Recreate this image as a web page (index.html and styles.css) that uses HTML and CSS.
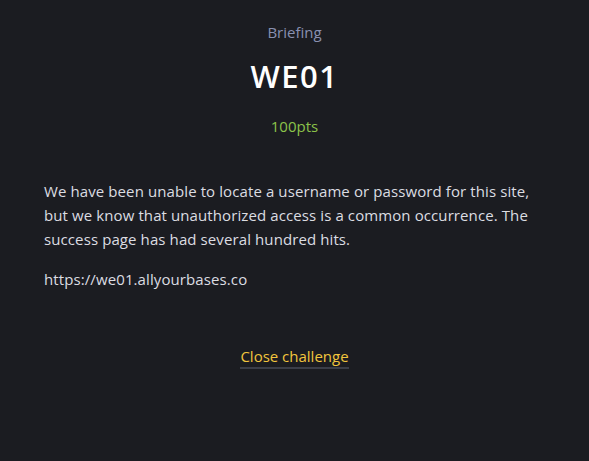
FILE: index.html
```html
<!DOCTYPE html>
<html>
<head>
<meta charset="utf-8">
<link rel="stylesheet" href="styles.css">
</head>
<body>
<div class="modal">
  <div class="header">
    <div class="kicker">Briefing</div>
    <h1 class="title">WE01</h1>
    <div class="points">100pts</div>
  </div>
  <div class="body">
    <p class="para">We have been unable to locate a username or password for this site, but we know that unauthorized access is a common occurrence. The success page has had several hundred hits.</p>
    <p class="para">https://we01.allyourbases.co</p>
  </div>
  <div class="footer">
    <a class="close">Close challenge</a>
  </div>
</div>
</body>
</html>
```
FILE: styles.css
```css
html, body {
  margin: 0;
  padding: 0;
  background: #1b1c21;
  height: 100%;
}
body {
  font-family: "Open Sans", "Noto Sans", sans-serif;
  color: #dcdde2;
}
.modal {
  display: flex;
  flex-direction: column;
  padding: 0 44px;
}
.header {
  display: flex;
  flex-direction: column;
  align-items: center;
  padding-top: 22px;
}
.kicker {
  font-size: 15px;
  line-height: 20px;
  color: #8990b0;
  font-weight: 500;
}
.title {
  margin: 16px 0 0;
  font-size: 31px;
  line-height: 36px;
  font-weight: 600;
  color: #ffffff;
  letter-spacing: 1.5px;
}
.points {
  margin-top: 22px;
  font-size: 15px;
  line-height: 20px;
  color: #8bc34a;
  font-weight: 500;
}
.body {
  padding-top: 43px;
}
.para {
  margin: 0 0 16px;
  font-size: 15px;
  line-height: 24px;
  color: #dcdde2;
  font-weight: 500;
  letter-spacing: 0.1px;
}
.footer {
  display: flex;
  justify-content: center;
  padding-top: 39px;
}
.close {
  font-size: 15px;
  line-height: 20px;
  color: #f2c53d;
  font-weight: 500;
  border-bottom: 2px solid #3b3e48;
  padding-bottom: 1px;
}
```
